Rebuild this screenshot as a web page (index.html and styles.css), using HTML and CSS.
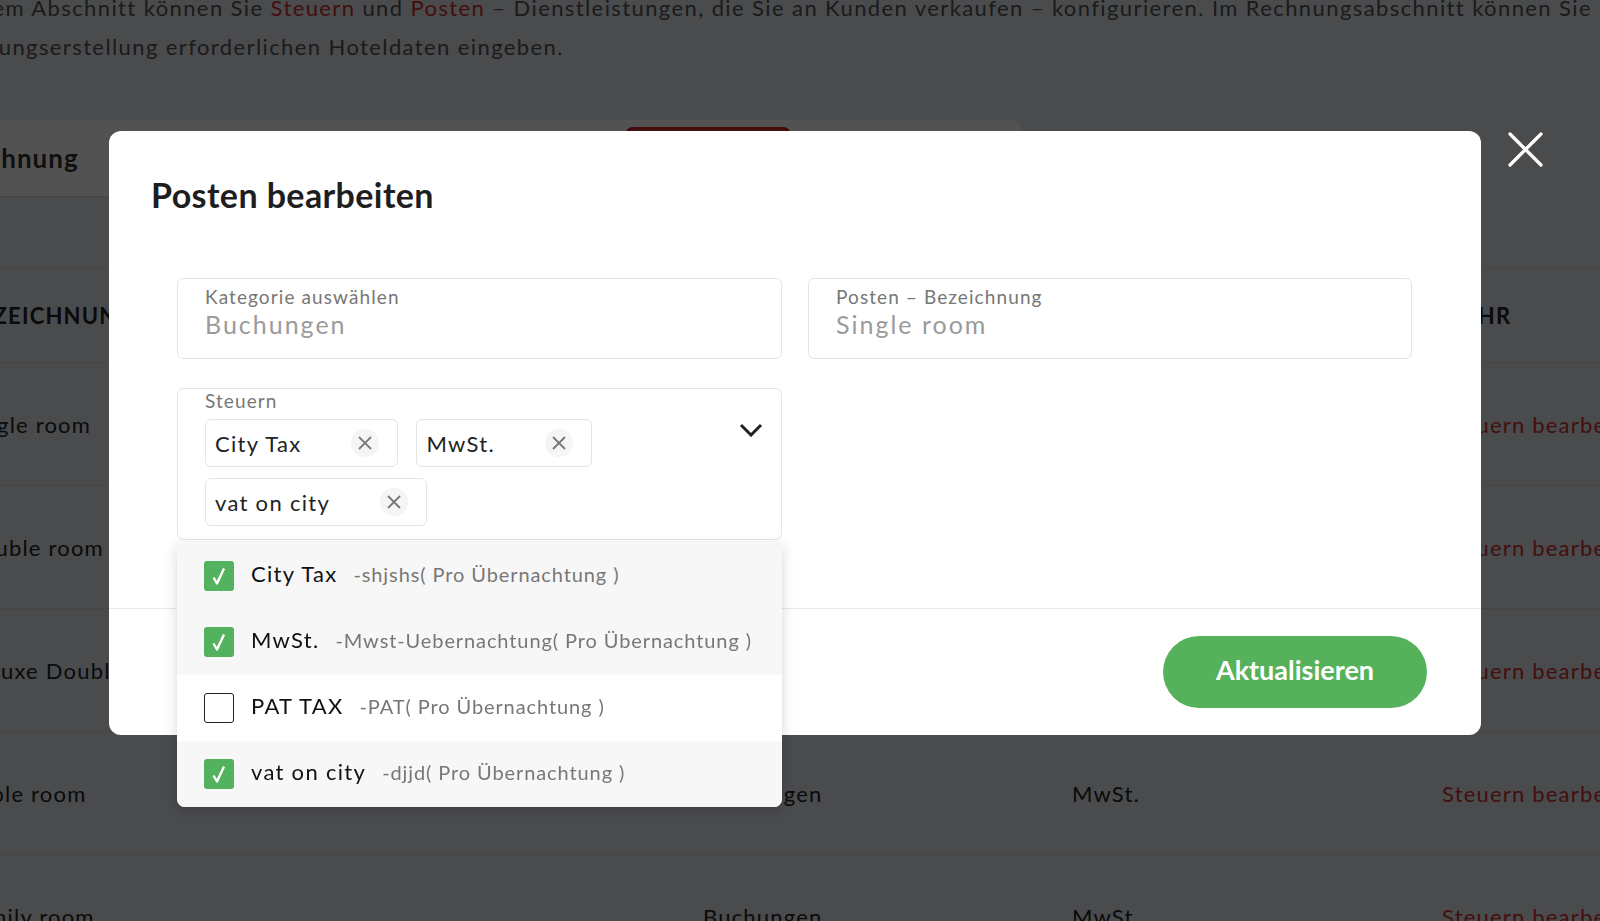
FILE: index.html
```html
<!DOCTYPE html>
<html lang="de">
<head>
    <meta charset="UTF-8">
    <meta name="viewport" content="width=device-width, initial-scale=1.0">
    <title>Posten bearbeiten</title>
    <link rel="stylesheet" href="styles.css">
</head>
<body>
    <div class="page">
        <p class="intro">
            <span class="line">In diesem Abschnitt können Sie <span class="link">Steuern</span> und <span class="link">Posten</span> – Dienstleistungen, die Sie an Kunden verkaufen – konfigurieren. Im Rechnungsabschnitt können Sie die für die</span>
            <span class="line line-2">Rechnungserstellung erforderlichen Hoteldaten eingeben.</span>
        </p>

        <div class="tabs">
            <div class="tab tab-first">Rechnung</div>
            <div class="tab">Hotel</div>
            <div class="tab">Steuern</div>
            <div class="tab tab-active">Posten</div>
        </div>

        <div class="toolbar"></div>

        <div class="table">
            <div class="row head">
                <div>BEZEICHNUNG</div>
                <div>KATEGORIE</div>
                <div>STEUERN</div>
                <div>MEHR</div>
            </div>
            <div class="row">
                <div>Single room</div>
                <div>Buchungen</div>
                <div>City Tax</div>
                <div class="link">Steuern bearbeiten</div>
            </div>
            <div class="row">
                <div>Double room</div>
                <div>Buchungen</div>
                <div>MwSt.</div>
                <div class="link">Steuern bearbeiten</div>
            </div>
            <div class="row">
                <div>Deluxe Double room</div>
                <div>Buchungen</div>
                <div>MwSt.</div>
                <div class="link">Steuern bearbeiten</div>
            </div>
            <div class="row">
                <div>Triple room</div>
                <div>Buchungen</div>
                <div>MwSt.</div>
                <div class="link">Steuern bearbeiten</div>
            </div>
            <div class="row">
                <div>Family room</div>
                <div>Buchungen</div>
                <div>MwSt.</div>
                <div class="link">Steuern bearbeiten</div>
            </div>
        </div>
    </div>

    <div class="overlay"></div>

    <button class="close-btn" aria-label="Schließen">
        <svg width="35" height="35" viewBox="0 0 35 35"><path d="M2 2 L33 33 M33 2 L2 33" stroke="#fff" stroke-width="3.2" stroke-linecap="round"/></svg>
    </button>

    <div class="modal">
        <div class="modal-header">
            <h2>Posten bearbeiten</h2>
        </div>
        <div class="modal-body">
            <div class="field">
                <label>Kategorie auswählen</label>
                <div class="value">Buchungen</div>
            </div>
            <div class="field">
                <label>Posten – Bezeichnung</label>
                <div class="value">Single room</div>
            </div>

            <div class="select">
                <div class="field field-multi">
                    <label>Steuern</label>
                    <div class="chips">
                        <span class="chip">City Tax<span class="chip-x"><svg width="16" height="16" viewBox="0 0 16 16"><path d="M2 2 L14 14 M14 2 L2 14" stroke="#777" stroke-width="1.8"/></svg></span></span>
                        <span class="chip">MwSt.<span class="chip-x"><svg width="16" height="16" viewBox="0 0 16 16"><path d="M2 2 L14 14 M14 2 L2 14" stroke="#777" stroke-width="1.8"/></svg></span></span>
                        <span class="chip">vat on city<span class="chip-x"><svg width="16" height="16" viewBox="0 0 16 16"><path d="M2 2 L14 14 M14 2 L2 14" stroke="#777" stroke-width="1.8"/></svg></span></span>
                    </div>
                    <svg class="chevron" width="24" height="14" viewBox="0 0 24 14"><path d="M2 2 L12 12 L22 2" fill="none" stroke="#222" stroke-width="3"/></svg>
                </div>

                <ul class="options">
                    <li class="option hl">
                        <span class="check on"><svg width="30" height="30" viewBox="0 0 30 30"><path d="M9.5 16.5 L13 22.5 L20 7.5" fill="none" stroke="#fff" stroke-width="2.4" stroke-linejoin="round"/></svg></span>
                        <span class="opt-name">City Tax</span>
                        <span class="opt-info">-shjshs( Pro Übernachtung )</span>
                    </li>
                    <li class="option hl">
                        <span class="check on"><svg width="30" height="30" viewBox="0 0 30 30"><path d="M9.5 16.5 L13 22.5 L20 7.5" fill="none" stroke="#fff" stroke-width="2.4" stroke-linejoin="round"/></svg></span>
                        <span class="opt-name">MwSt.</span>
                        <span class="opt-info">-Mwst-Uebernachtung( Pro Übernachtung )</span>
                    </li>
                    <li class="option">
                        <span class="check"></span>
                        <span class="opt-name">PAT TAX</span>
                        <span class="opt-info">-PAT( Pro Übernachtung )</span>
                    </li>
                    <li class="option hl">
                        <span class="check on"><svg width="30" height="30" viewBox="0 0 30 30"><path d="M9.5 16.5 L13 22.5 L20 7.5" fill="none" stroke="#fff" stroke-width="2.4" stroke-linejoin="round"/></svg></span>
                        <span class="opt-name">vat on city</span>
                        <span class="opt-info">-djjd( Pro Übernachtung )</span>
                    </li>
                </ul>
            </div>
        </div>
        <div class="modal-footer">
            <button class="btn">Aktualisieren</button>
        </div>
    </div>
</body>
</html>
```

FILE: styles.css
```css
body {
    margin: 0;
    padding: 0;
    overflow: hidden;
    font-family: Lato, "Liberation Sans", sans-serif;
    background-color: #e7e9ee;
    color: #222;
}
.page {
    margin-left: -62px;
    margin-top: -12px;
    width: 1800px;
}
.intro {
    margin: 0;
    font-size: 22px;
    line-height: 39px;
    letter-spacing: 1.4px;
    white-space: nowrap;
    color: #555;
}
.intro .line {
    display: block;
    margin-left: -18px;
}
.intro .line-2 {
    margin-left: -6px;
}
.link {
    color: #d0312d;
}
.tabs {
    display: flex;
    width: 1083px;
    height: 76px;
    margin-top: 54px;
    background: #fff;
    border-radius: 0 10px 0 0;
    border-bottom: 1px solid #d8dade;
}
.tab {
    width: 224px;
    display: flex;
    align-items: center;
    font-size: 26px;
    font-weight: bold;
    letter-spacing: 1px;
    color: #333;
}
.tab-first {
    width: 240px;
    padding-left: 18px;
    box-sizing: border-box;
}
.tab-active {
    width: 164px;
    margin-top: 7px;
    justify-content: center;
    background: #d0312d;
    color: #fff;
    border-radius: 6px 6px 0 0;
}
.toolbar {
    height: 70px;
    border-bottom: 1px solid #d8dade;
}
.table {
    padding-left: 26px;
}
.row {
    display: grid;
    grid-template-columns: 739px 369px 370px 1fr;
    align-items: center;
    height: 122px;
    border-bottom: 1px solid #d8dade;
    font-size: 22px;
    letter-spacing: 1.2px;
}
.row.head {
    height: 94px;
    font-weight: bold;
}
.overlay {
    position: fixed;
    top: 0;
    left: 0;
    width: 100%;
    height: 100%;
    background: rgba(0, 0, 0, 0.68);
}
.close-btn {
    position: fixed;
    left: 1508px;
    top: 132px;
    width: 35px;
    height: 35px;
    padding: 0;
    border: none;
    background: none;
    cursor: pointer;
}
.close-btn svg {
    display: block;
}
.modal {
    position: fixed;
    left: 109px;
    top: 131px;
    width: 1372px;
    background: #fff;
    border-radius: 12px;
}
.modal-header {
    padding: 44px 42px 0;
}
.modal-header h2 {
    margin: 0;
    font-size: 34px;
    line-height: 40px;
    font-weight: bold;
    letter-spacing: 0.4px;
    color: #1e1e1e;
}
.modal-body {
    display: grid;
    grid-template-columns: 605px 604px;
    column-gap: 26px;
    row-gap: 29px;
    align-items: start;
    padding: 63px 68px 68px;
}
.field {
    box-sizing: border-box;
    height: 81px;
    padding: 7px 27px 0;
    border: 1px solid #e5e5e5;
    border-radius: 6px;
    background: #fff;
}
.field label {
    display: block;
    font-size: 19px;
    line-height: 22px;
    letter-spacing: 1.1px;
    color: #777;
}
.field .value {
    font-size: 25px;
    line-height: 32px;
    letter-spacing: 2px;
    color: #9b9b9b;
}
.select {
    position: relative;
}
.field-multi {
    position: relative;
    height: 152px;
    padding: 1px 27px 0;
}
.chips {
    display: flex;
    flex-wrap: wrap;
    column-gap: 18px;
    row-gap: 11px;
    margin-top: 7px;
    width: 420px;
}
.chip {
    display: flex;
    align-items: center;
    box-sizing: border-box;
    height: 48px;
    padding: 0 18px 0 9px;
    border: 1px solid #e5e5e5;
    border-radius: 6px;
    font-size: 22px;
    letter-spacing: 1.3px;
    color: #222;
}
.chip-x {
    display: flex;
    align-items: center;
    justify-content: center;
    width: 28px;
    height: 28px;
    margin-left: 50px;
    border-radius: 50%;
    background: #f4f5f7;
}
.chevron {
    position: absolute;
    right: 18px;
    top: 34px;
}
.options {
    position: absolute;
    top: calc(100% + 3px);
    left: 0;
    right: 0;
    margin: 0;
    padding: 0;
    list-style: none;
    background: #fff;
    border-radius: 0 0 8px 8px;
    box-shadow: 0 4px 14px rgba(0, 0, 0, 0.16);
    overflow: hidden;
    z-index: 10;
}
.option {
    display: flex;
    align-items: center;
    height: 66px;
    padding-left: 27px;
}
.option.hl {
    background: #f7f7f7;
}
.check {
    box-sizing: border-box;
    width: 30px;
    height: 30px;
    border: 1.5px solid #222;
    border-radius: 3px;
    background: #fff;
}
.check.on {
    border: none;
    background: #53b25d;
}
.check svg {
    display: block;
}
.opt-name {
    margin-left: 17px;
    margin-bottom: 5px;
    font-size: 22px;
    letter-spacing: 1.3px;
    color: #111;
}
.opt-info {
    margin-left: 16px;
    margin-bottom: 5px;
    font-size: 20px;
    letter-spacing: 0.9px;
    color: #777;
}
.modal-footer {
    display: flex;
    justify-content: flex-end;
    padding: 27px 54px 27px;
    border-top: 1px solid #e8e8e8;
}
.btn {
    width: 264px;
    height: 72px;
    padding: 0 0 5px;
    border: none;
    border-radius: 36px;
    background-color: #55b25b;
    color: #fff;
    font-family: Lato, "Liberation Sans", sans-serif;
    font-size: 27px;
    font-weight: bold;
    cursor: pointer;
}
```
